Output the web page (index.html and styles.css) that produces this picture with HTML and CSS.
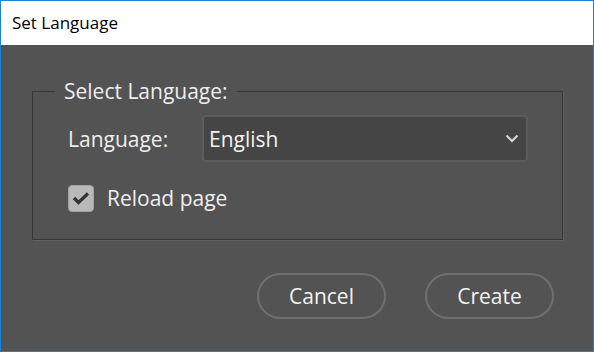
FILE: index.html
```html
<!DOCTYPE html>
<html lang="en">
<head>
    <meta charset="UTF-8">
    <meta name="viewport" content="width=device-width, initial-scale=1.0">
    <title>Set Language</title>
    <link rel="stylesheet" href="styles.css">
</head>
<body>
    <div class="window">
        <div class="titlebar">Set Language</div>

        <div class="dialog">
            <fieldset class="group">
                <legend>Select Language:</legend>

                <div class="row">
                    <label class="fieldLabel" for="language">Language:</label>
                    <div class="selectWrap">
                        <select id="language" class="select">
                            <option>English</option>
                            <option>Deutsch</option>
                            <option>Français</option>
                        </select>
                        <svg class="chevron" width="14" height="9" viewBox="0 0 14 9">
                            <path d="M1.5 1.5 L7 7 L12.5 1.5" fill="none" stroke="#d8d8d8" stroke-width="2"/>
                        </svg>
                    </div>
                </div>

                <label class="check">
                    <span class="box">
                        <svg width="18" height="14" viewBox="0 0 18 14">
                            <path d="M2 7 L6.5 11.5 L16 2.5" fill="none" stroke="#333333" stroke-width="3.2"/>
                        </svg>
                    </span>
                    Reload page
                </label>
            </fieldset>

            <div class="buttons">
                <button class="btn">Cancel</button>
                <button class="btn">Create</button>
            </div>
        </div>
    </div>
</body>
</html>
```

FILE: styles.css
```css
html, body {
    margin: 0;
    padding: 0;
}

body {
    font-family: "Open Sans", "Noto Sans", sans-serif;
    background-color: #535353;
}

.window {
    width: 594px;
    height: 352px;
    box-sizing: border-box;
    border: 1px solid #1883d7;
    display: flex;
    flex-direction: column;
    background-color: #535353;
}

.titlebar {
    height: 44px;
    background-color: #ffffff;
    color: #000000;
    font-size: 17px;
    line-height: 44px;
    padding-left: 11px;
}

.dialog {
    flex: 1;
    padding: 33px 30px 0 31px;
    color: #eeeeee;
}

.group {
    margin: 0;
    padding: 11px 20px 24px 35px;
    height: 162px;
    box-sizing: border-box;
    border: 1px solid #363636;
    box-shadow: 1px 1px 0 #5f5f5f;
    min-width: 0;
}

.group legend {
    font-size: 21px;
    line-height: 26px;
    padding: 0 9px;
    margin-left: -13px;
}

.row {
    display: flex;
    align-items: center;
}

.fieldLabel {
    width: 134px;
    font-size: 21px;
}

.selectWrap {
    position: relative;
    width: 326px;
    height: 47px;
}

.select {
    appearance: none;
    -webkit-appearance: none;
    width: 100%;
    height: 100%;
    box-sizing: border-box;
    background-color: #454545;
    border: 2px solid #5c5c5c;
    border-radius: 4px;
    color: #f2f2f2;
    font-family: inherit;
    font-size: 21px;
    padding: 0 0 0 5px;
    outline: none;
}

.chevron {
    position: absolute;
    right: 9px;
    top: 19px;
    pointer-events: none;
}

.check {
    display: flex;
    align-items: center;
    gap: 13px;
    margin-top: 22px;
    font-size: 21px;
}

.box {
    width: 26px;
    height: 27px;
    box-sizing: border-box;
    background-color: #b9b9b9;
    border: 1px solid #a0a0a0;
    border-radius: 4px;
    display: flex;
    align-items: center;
    justify-content: center;
}

.buttons {
    display: flex;
    justify-content: flex-end;
    gap: 39px;
    margin-top: 33px;
    padding-right: 9px;
}

.btn {
    width: 129px;
    height: 46px;
    border: 2px solid #707070;
    border-radius: 23px;
    background-color: #535353;
    color: #f2f2f2;
    font-family: inherit;
    font-size: 21px;
    cursor: pointer;
}
```
